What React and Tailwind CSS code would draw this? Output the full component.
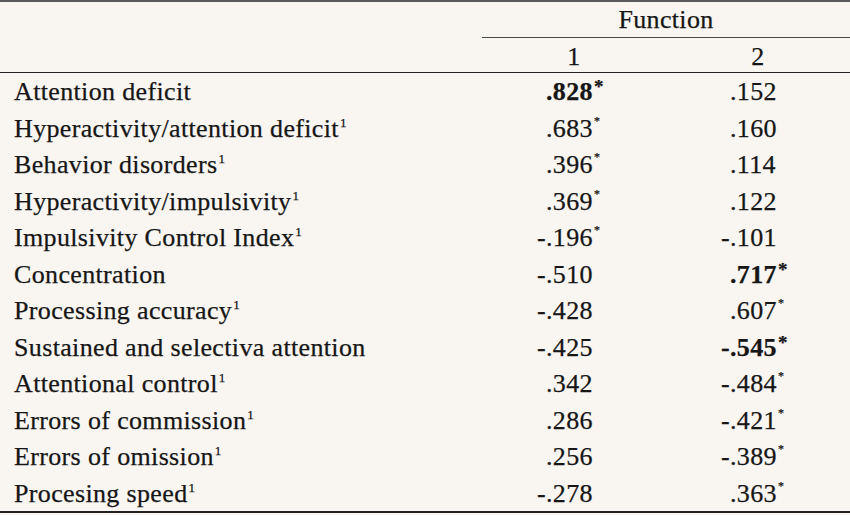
const rows = [
  { label: 'Attention deficit', a: '.828', aStar: 'bold', b: '.152' },
  { label: 'Hyperactivity/attention deficit', sup: true, a: '.683', aStar: 'small', b: '.160' },
  { label: 'Behavior disorders', sup: true, a: '.396', aStar: 'small', b: '.114' },
  { label: 'Hyperactivity/impulsivity', sup: true, a: '.369', aStar: 'small', b: '.122' },
  { label: 'Impulsivity Control Index', sup: true, a: '-.196', aStar: 'small', b: '-.101' },
  { label: 'Concentration', a: '-.510', b: '.717', bStar: 'bold' },
  { label: 'Processing accuracy', sup: true, a: '-.428', b: '.607', bStar: 'small' },
  { label: 'Sustained and selectiva attention', a: '-.425', b: '-.545', bStar: 'bold' },
  { label: 'Attentional control', sup: true, a: '.342', b: '-.484', bStar: 'small' },
  { label: 'Errors of commission', sup: true, a: '.286', b: '-.421', bStar: 'small' },
  { label: 'Errors of omission', sup: true, a: '.256', b: '-.389', bStar: 'small' },
  { label: 'Procesing speed', sup: true, a: '-.278', b: '.363', bStar: 'small' },
];

// decimal-aligned value: minus sign sits in its own box so the dots line up
function Value({ value, star }) {
  const neg = value.startsWith('-');
  const rest = neg ? value.slice(1) : value;
  const bold = star === 'bold';
  return (
    <div className={`pl-[55px] whitespace-nowrap ${bold ? 'font-bold' : ''}`}>
      <span className="inline-block w-[9px]">{neg ? '-' : ''}</span>
      <span>{rest}</span>
      {star === 'bold' && <span className="relative -top-[7px] ml-[1px] text-[19px] leading-none">*</span>}
      {star === 'small' && <span className="relative -top-[12px] ml-[1px] text-[12px] leading-none">*</span>}
    </div>
  );
}

export default function App() {
  return (
    <div
      className="w-[850px] h-[515px] bg-[#f9f5f1] text-[#161616] text-[26px] tracking-[0.35px] border-t-2 border-[#5a5a5a] overflow-hidden [-webkit-text-stroke:0.25px_#161616]"
      style={{ fontFamily: '"Liberation Serif", serif' }}
    >
      <div className="grid grid-cols-[482px_368px] h-[36px]">
        <div />
        <div className="h-[36px] border-b border-[#4a4a4a] text-center leading-[32px] pt-[2px]">Function</div>
      </div>
      <div className="grid grid-cols-[482px_184px_184px] h-[35px] border-b border-[#222] leading-[31px] pt-[3px]">
        <div />
        <div className="text-center">1</div>
        <div className="text-center">2</div>
      </div>
      <div className="border-b-2 border-[#222]">
        {rows.map((r) => (
          <div key={r.label} className="grid grid-cols-[482px_184px_184px] h-[36.5px] leading-[34.5px] pt-[2px]">
            <div className="pl-[14px] whitespace-nowrap">
              {r.label}
              {r.sup && <span className="relative -top-[10px] ml-[1px] text-[13px] leading-none">1</span>}
            </div>
            <Value value={r.a} star={r.aStar} />
            <Value value={r.b} star={r.bStar} />
          </div>
        ))}
      </div>
    </div>
  );
}
